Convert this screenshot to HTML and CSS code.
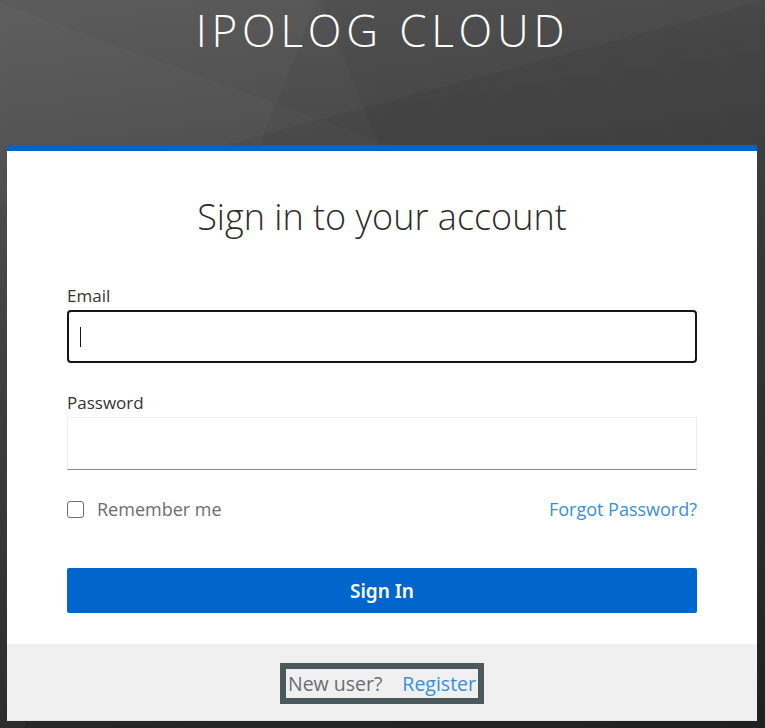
FILE: index.html
```html
<!DOCTYPE html>
<html lang="en">
<head>
<meta charset="utf-8">
<title>IPOLOG CLOUD</title>
<link rel="stylesheet" href="styles.css">
</head>
<body>
<div class="page">
  <header class="brand">IPOLOG CLOUD</header>
  <main class="card">
    <h1 class="title">Sign in to your account</h1>
    <form class="form">
      <div class="field">
        <label class="label" for="email">Email</label>
        <div class="input focused"><span class="caret"></span></div>
      </div>
      <div class="field">
        <label class="label" for="password">Password</label>
        <div class="input plain"></div>
      </div>
      <div class="options">
        <label class="remember"><span class="checkbox"></span>Remember me</label>
        <a class="link" href="#">Forgot Password?</a>
      </div>
      <button class="submit" type="button">Sign In</button>
    </form>
    <footer class="card-footer">
      <div class="register"><span class="muted">New user?</span><a class="link" href="#">Register</a></div>
    </footer>
  </main>
</div>
</body>
</html>
```
FILE: styles.css
```css
* { box-sizing: border-box; }
html, body { margin: 0; padding: 0; }
body {
  width: 765px;
  height: 728px;
  overflow: hidden;
  font-family: "Open Sans", "Noto Sans", sans-serif;
  background-color: #2e2e2e;
  background-image:
    linear-gradient(112deg, rgba(255,255,255,0.025) 0 30%, rgba(0,0,0,0) 30% 100%),
    linear-gradient(68deg, rgba(0,0,0,0) 0 58%, rgba(0,0,0,0.05) 58% 100%),
    linear-gradient(165deg, rgba(255,255,255,0.025) 0 22%, rgba(0,0,0,0) 22% 100%),
    linear-gradient(200deg, rgba(0,0,0,0.04) 0 28%, rgba(0,0,0,0) 28% 100%),
    linear-gradient(172deg, #575757 0%, #4a4a4a 20%, #383838 50%, #222 100%);
}
.page {
  display: flex;
  flex-direction: column;
  align-items: center;
}
.brand {
  margin-top: 5px;
  height: 140px;
  color: #fff;
  font-weight: 300;
  font-size: 44px;
  letter-spacing: 4.8px;
  line-height: 50px;
}
.card {
  width: 750px;
  margin-left: -1px;
  background: #fff;
  border-top: 6px solid #0066cc;
  display: flex;
  flex-direction: column;
}
.title {
  margin: 43px 0 0;
  text-align: center;
  font-weight: 300;
  font-size: 36px;
  line-height: 46px;
  color: #2b2b2b;
}
.form {
  padding: 44px 60px 31px;
  display: flex;
  flex-direction: column;
}
.field { display: flex; flex-direction: column; margin-bottom: 28px; }
.label {
  font-size: 17px;
  font-weight: 400;
  line-height: 24px;
  color: #333;
  margin-bottom: 2px;
}
.input {
  height: 53px;
  width: 630px;
  background: #fff;
}
.focused {
  border: 2px solid #151515;
  border-radius: 4px;
  display: flex;
  align-items: center;
  padding-left: 11px;
}
.caret { width: 1px; height: 20px; background: #151515; }
.plain {
  border: 1px solid #ededed;
  border-bottom-color: #8a8d90;
}
.options {
  display: flex;
  justify-content: space-between;
  align-items: center;
  margin-top: -4px;
  height: 30px;
  font-size: 18px;
}
.remember {
  display: flex;
  align-items: center;
  color: #6a6e73;
}
.checkbox {
  width: 17px;
  height: 17px;
  border: 1.5px solid #6a6e73;
  border-radius: 3px;
  margin-right: 13px;
}
.link { color: #3b8fd0; text-decoration: none; }
.submit {
  margin-top: 44px;
  height: 45px;
  width: 630px;
  border: 0;
  border-radius: 2px;
  background: #0066cc;
  color: #fff;
  font-family: "Noto Sans", "Open Sans", sans-serif;
  font-weight: 600;
  font-size: 19px;
}
.card-footer {
  background: #f0f0f0;
  height: 77px;
  border-bottom: 1px solid #e4e4e4;
  display: flex;
  justify-content: center;
  padding-top: 18px;
}
.register {
  outline: 6px solid #4b585c;
  margin-top: 7px;
  height: 29px;
  padding: 0 2px;
  display: flex;
  align-items: center;
  gap: 20px;
  font-size: 19.5px;
}
.muted { color: #6a6e73; }
```
